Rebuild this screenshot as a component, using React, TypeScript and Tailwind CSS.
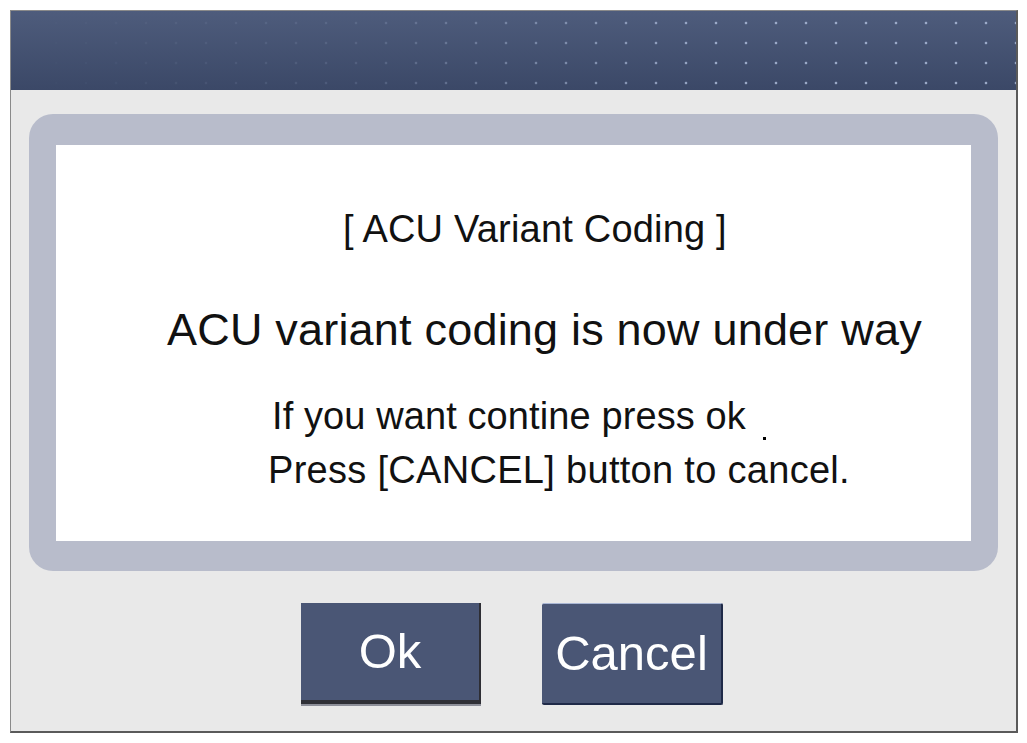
import React from "react";

export default function App() {
  const font = { fontFamily: '"Liberation Sans", Arial, sans-serif' };
  return (
    <div className="w-[1027px] h-[743px] bg-white p-[10px] pr-[9px] pb-[10px]" style={font}>
      <div className="w-[1008px] h-[723px] flex flex-col bg-[#e9e9e9] border-l border-t border-[#8a8a8a] border-r-2 border-b-2 border-r-[#5a5a5a] border-b-[#5a5a5a]">
        <div className="relative h-[79px] shrink-0 bg-gradient-to-b from-[#4e5c7c] to-[#3b4867] overflow-hidden">
          <div className="absolute inset-0 bg-[radial-gradient(circle,rgba(170,185,215,0.85)_1px,transparent_1.7px)] bg-[length:30px_20px] bg-[position:0px_2px] [mask-image:linear-gradient(to_right,transparent_0%,rgba(0,0,0,0.2)_35%,black_70%)]" />
        </div>
        <div className="flex-1 flex flex-col px-[18px] pt-[24px]">
          <div className="h-[457px] rounded-[24px] bg-[#b8bccb] pl-[27px] pr-[27px] pt-[31px] pb-[30px]">
            <div className="h-full bg-white text-[#111] flex flex-col">
              <div className="mt-[65px] pl-[287px] text-[38px] leading-none tracking-[0.2px] whitespace-nowrap">[ ACU Variant Coding ]</div>
              <div className="mt-[59px] pl-[111px] text-[45px] leading-none tracking-[0.2px] whitespace-nowrap">ACU variant coding is now under way</div>
              <div className="mt-[45px] pl-[216px] text-[38px] leading-none tracking-[0.1px] whitespace-nowrap relative">
                If you want contine press ok
                <span className="absolute left-[707px] top-[40px] w-[3px] h-[3px] bg-black" />
              </div>
              <div className="mt-[16px] pl-[212px] text-[38px] leading-none tracking-[0.3px] whitespace-nowrap">Press [CANCEL] button to cancel.</div>
            </div>
          </div>
          <div className="flex gap-[61px] mt-[32px] ml-[272px]">
            <div className="w-[180px] h-[101px] bg-[#4a5675] border-r-2 border-r-[#2e2e34] border-b-[4px] border-b-[#2f3036] shadow-[0_2px_0_#8d8f99] flex items-center justify-center text-white text-[49px] leading-none">
              Ok
            </div>
            <div className="w-[181px] h-[102px] bg-[#4a5675] border-t border-t-[#a9b6d4] border-r-2 border-r-[#1f2a48] border-b-2 border-b-[#1f2a48] rounded-[2px] flex items-center justify-center text-white text-[49px] leading-none">
              Cancel
            </div>
          </div>
        </div>
      </div>
    </div>
  );
}
